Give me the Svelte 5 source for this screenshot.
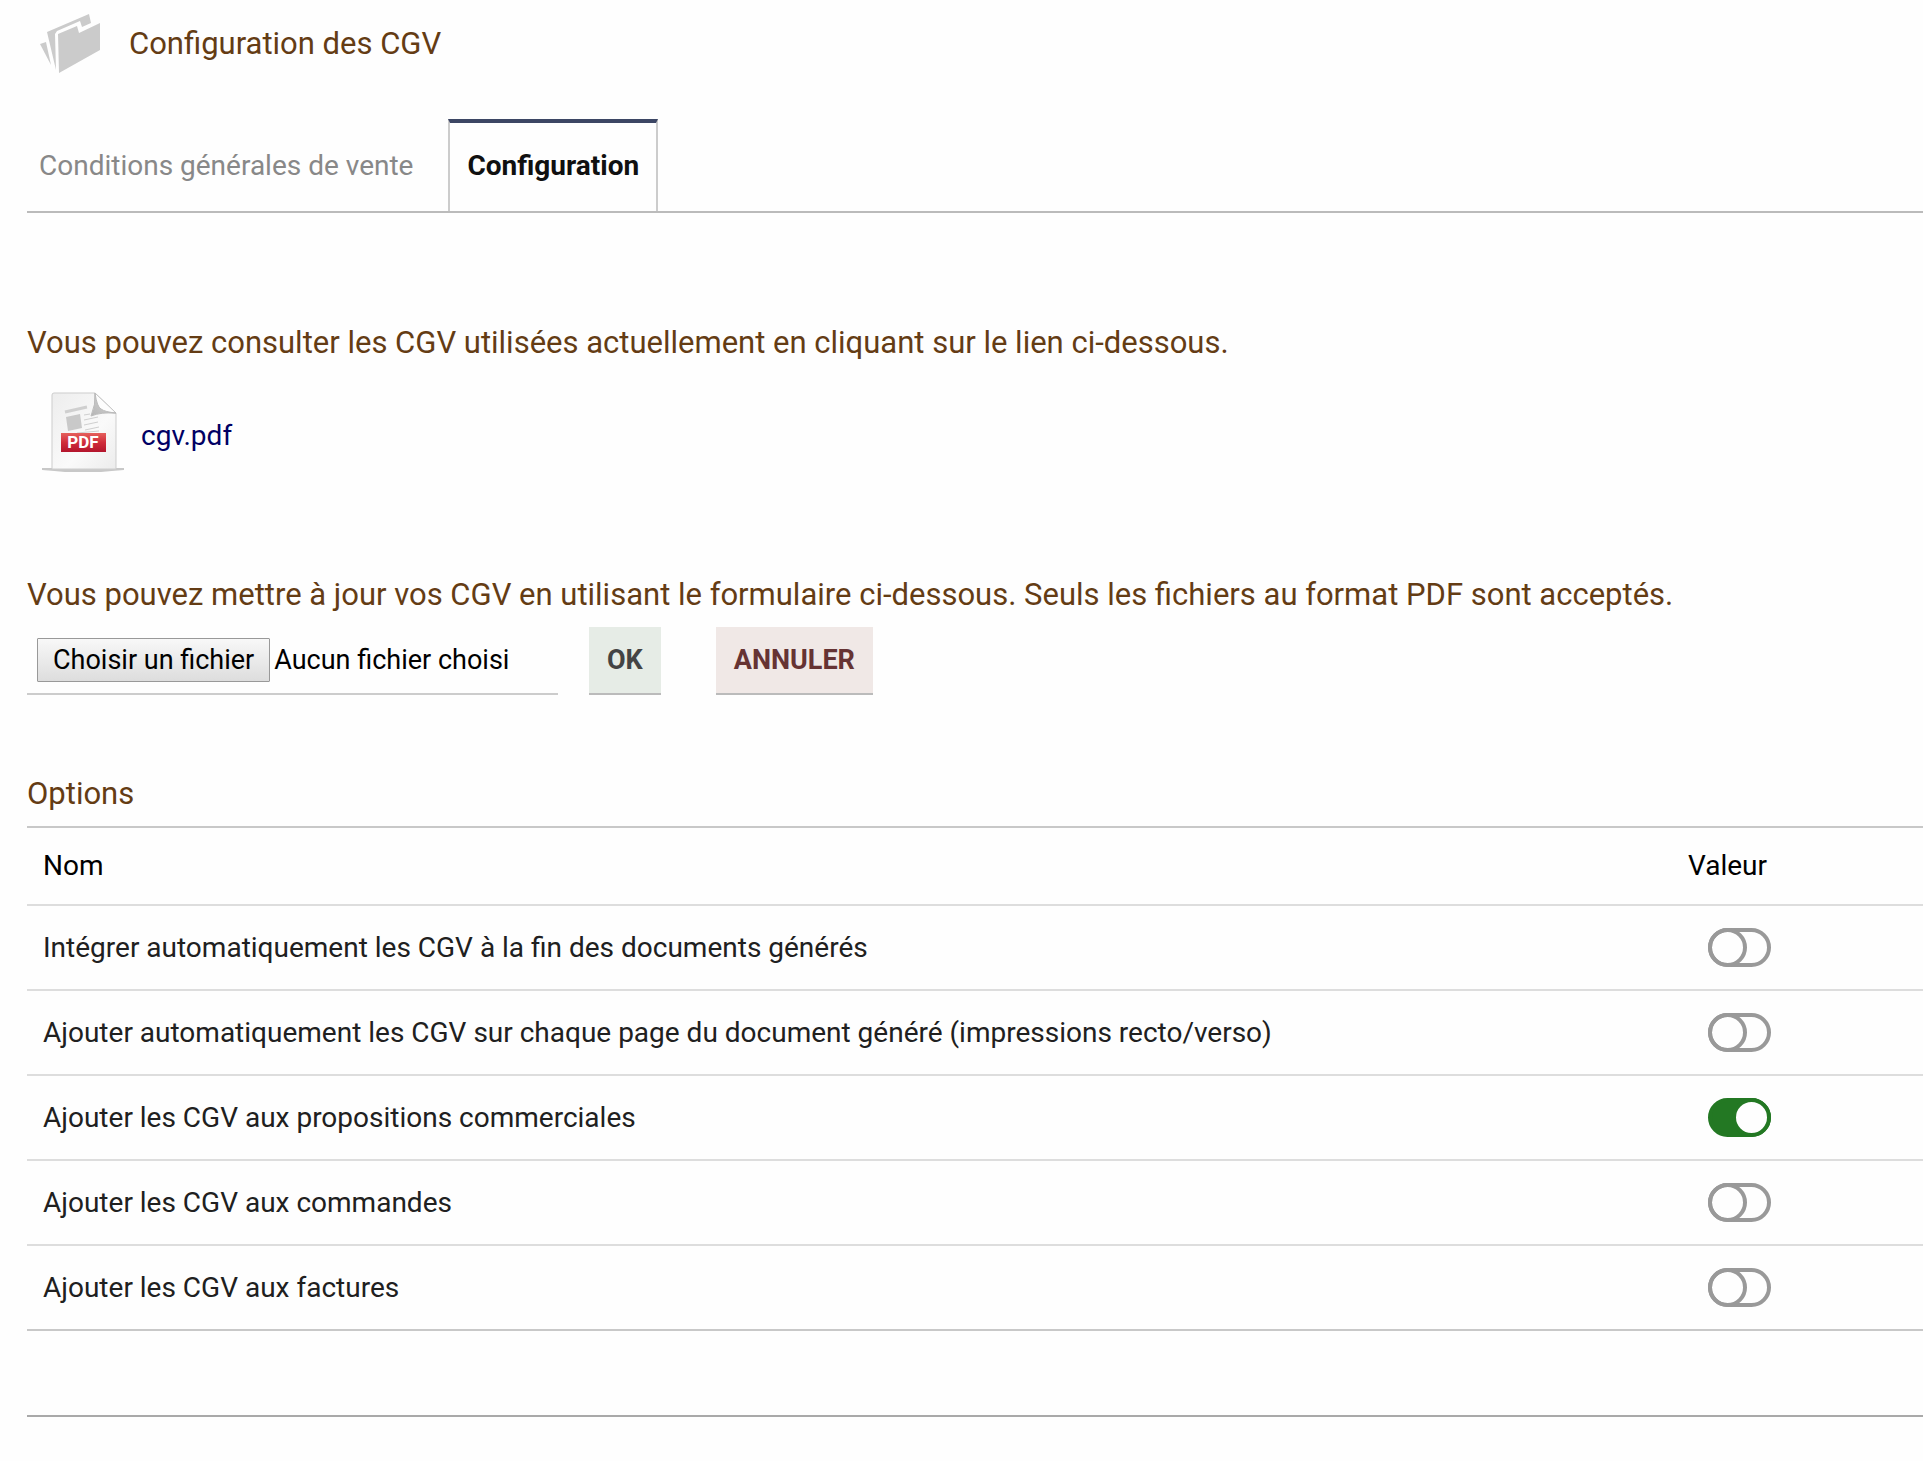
<script>
  let files;

  let options = [
    { id: 'fin', label: 'Intégrer automatiquement les CGV à la fin des documents générés', enabled: false },
    { id: 'page', label: 'Ajouter automatiquement les CGV sur chaque page du document généré (impressions recto/verso)', enabled: false },
    { id: 'propal', label: 'Ajouter les CGV aux propositions commerciales', enabled: true },
    { id: 'commande', label: 'Ajouter les CGV aux commandes', enabled: false },
    { id: 'facture', label: 'Ajouter les CGV aux factures', enabled: false }
  ];

  $: fileName = files && files.length ? files[0].name : 'Aucun fichier choisi';
</script>

<main class="page">
  <header class="title">
    <svg class="title-icon" viewBox="0 0 62 60" aria-hidden="true">
      <g fill="#cbcbcb">
        <path d="M0 30 L6 28 L11 51 Z" />
        <path d="M7 18 L49 0 L51 9 L42 13 L40 7 L17 17 L15 20 L16 56 Z" />
        <path d="M18 20 L37 12 L39 19 L60 9 L60 36 L19 59 Z" />
      </g>
    </svg>
    <h1>Configuration des CGV</h1>
  </header>

  <nav class="tabs">
    <a href="#conditions" class="tab">Conditions générales de vente</a>
    <a href="#configuration" class="tab active" aria-current="page">Configuration</a>
  </nav>

  <section class="current">
    <p class="intro">Vous pouvez consulter les CGV utilisées actuellement en cliquant sur le lien ci-dessous.</p>
    <a href="#cgv.pdf" class="document">
      <svg class="pdf-icon" viewBox="0 0 84 82" aria-hidden="true">
        <defs>
          <linearGradient id="sheet" x1="0" y1="0" x2="1" y2="1">
            <stop offset="0" stop-color="#ededed" />
            <stop offset="0.6" stop-color="#fafafa" />
            <stop offset="1" stop-color="#ececec" />
          </linearGradient>
          <linearGradient id="band" x1="0" y1="0" x2="0" y2="1">
            <stop offset="0" stop-color="#e5605c" />
            <stop offset="0.5" stop-color="#d02c3b" />
            <stop offset="1" stop-color="#b3152c" />
          </linearGradient>
          <linearGradient id="fold" x1="0" y1="1" x2="1" y2="0">
            <stop offset="0" stop-color="#b5b5b5" />
            <stop offset="1" stop-color="#dcdcdc" />
          </linearGradient>
        </defs>
        <path d="M1 76 H83 V78 Q70 79 60 80 H24 Q14 79 1 78 Z" fill="#c8c8c8" />
        <path d="M11 3 Q11 1 13 1 H54 L75 21 V77 H11 Z" fill="url(#sheet)" stroke="#cdcdcd" />
        <path d="M54 1 L75 21 L54 20 Z" fill="#fdfdfd" stroke="#c4c4c4" />
        <path d="M54 1 Q56 15 60 17 Q64 20 75 21 Q60 20 50 24 Q55 12 54 1 Z" fill="url(#fold)" stroke="#bbb" />
        <g fill="none" stroke="#cfcfcf">
          <path d="M24 20 L46 15" stroke-width="3" />
          <path d="M43 23 L49 22 M43 28 L57 25 M43 33 L57 30 M44 38 L58 35 M36 41 L58 39" stroke-width="1" />
        </g>
        <path d="M25 25 L39 22 L41 36 L27 39 Z" fill="#c9c9c9" />
        <rect x="20" y="41" width="45" height="19" fill="url(#band)" />
        <text x="42" y="56" text-anchor="middle" class="pdf-text">PDF</text>
      </svg>
      <span>cgv.pdf</span>
    </a>
  </section>

  <section class="update">
    <p class="intro">Vous pouvez mettre à jour vos CGV en utilisant le formulaire ci-dessous. Seuls les fichiers au format PDF sont acceptés.</p>
    <form class="upload" on:submit|preventDefault>
      <label class="file">
        <input type="file" accept="application/pdf" bind:files />
        <span class="choose">Choisir un fichier</span>
        <span>{fileName}</span>
      </label>
      <button type="submit" class="ok">OK</button>
      <button type="reset" class="cancel">ANNULER</button>
    </form>
  </section>

  <section class="options">
    <h2>Options</h2>
    <table>
      <thead>
        <tr>
          <th scope="col">Nom</th>
          <th scope="col" class="value">Valeur</th>
        </tr>
      </thead>
      <tbody>
        {#each options as option (option.id)}
          <tr>
            <td><label for={option.id}>{option.label}</label></td>
            <td class="value">
              <input type="checkbox" role="switch" id={option.id} class="switch" bind:checked={option.enabled} />
            </td>
          </tr>
        {/each}
      </tbody>
    </table>
  </section>
</main>

<style>
  :global(body) {
    background-color: #fefefe;
  }

  .page {
    padding: 0 0 44px 27px;
    font-family: Roboto, sans-serif;
    font-size: 28px;
    line-height: 36px;
    color: #202020;
  }

  h1,
  h2,
  .intro {
    margin: 0;
    font-size: 31px;
    font-weight: 400;
    line-height: 36px;
    color: #643c14;
  }

  .title {
    display: flex;
    align-items: center;
    gap: 27px;
    padding: 14px 0 0 13px;
  }

  .title-icon {
    width: 62px;
    height: 60px;
  }

  /* Tabs */
  .tabs {
    display: flex;
    margin-top: 45px;
    border-bottom: 2px solid #bbb;
  }

  .tab {
    padding: 29px 12px 27px;
    margin-right: 23px;
    color: #888;
    text-decoration: none;
  }

  .tab.active {
    padding: 25px 17px 27px;
    border: 2px solid #ccc;
    border-top: 4px solid #3c4664;
    border-bottom: none;
    color: #101010;
    font-weight: 700;
  }

  /* Current document */
  .current {
    margin-top: 112px;
  }

  .document {
    display: flex;
    align-items: flex-end;
    gap: 16px;
    width: fit-content;
    margin: 31px 0 0 14px;
    color: #000064;
    text-decoration: none;
  }

  .document span {
    padding-bottom: 20px;
  }

  .pdf-icon {
    width: 84px;
    height: 82px;
  }

  .pdf-text {
    font-size: 17px;
    font-weight: 700;
    fill: #fff;
  }

  /* Upload form */
  .update {
    margin-top: 103px;
  }

  .upload {
    display: flex;
    margin-top: 14px;
    font-size: 27px;
  }

  .file {
    display: flex;
    align-items: center;
    gap: 4px;
    box-sizing: border-box;
    width: 531px;
    margin-right: 31px;
    padding: 0 10px;
    border-bottom: 2px solid #ccc;
    color: #000;
  }

  .file input {
    position: absolute;
    width: 1px;
    height: 1px;
    opacity: 0;
  }

  .choose {
    padding: 3px 15px;
    border: 1px solid #999;
    border-radius: 1px;
    background: linear-gradient(#f8f8f8, #ddd);
  }

  button {
    padding: 15px 18px;
    border: none;
    border-bottom: 2px solid #bbb;
    font: inherit;
    font-weight: 700;
    cursor: pointer;
  }

  .ok {
    margin-right: 55px;
    background-color: #e6ece6;
    color: #444;
  }

  .cancel {
    background-color: #f0e8e6;
    color: #633;
  }

  /* Options table */
  .options {
    margin-top: 81px;
    padding-bottom: 84px;
    border-bottom: 2px solid #a9a9a9;
  }

  table {
    width: 100%;
    margin-top: 14px;
    border-collapse: separate;
    border-spacing: 0;
    border-top: 2px solid #c8c8c8;
    border-bottom: 2px solid #c8c8c8;
  }

  th,
  td {
    padding: 0 16px;
    text-align: left;
    font-weight: 400;
  }

  th {
    height: 76px;
    color: #000;
  }

  td {
    height: 83px;
    border-top: 2px solid #ddd;
  }

  .value {
    width: 219px;
  }

  /* The knob is a ring when off and a plain white disc when on */
  .switch {
    display: flex;
    appearance: none;
    box-sizing: border-box;
    width: 63px;
    height: 39px;
    margin: 0 0 0 20px;
    border: 4px solid #999;
    border-radius: 20px;
    cursor: pointer;
  }

  .switch::before {
    content: '';
    flex: none;
    box-sizing: border-box;
    width: 39px;
    height: 39px;
    margin: -4px;
    border: 4px solid #999;
    border-radius: 50%;
  }

  .switch:checked {
    justify-content: flex-end;
    border-color: #237823;
    background-color: #237823;
  }

  .switch:checked::before {
    border-color: #237823;
    background-color: #fefefe;
  }
</style>
